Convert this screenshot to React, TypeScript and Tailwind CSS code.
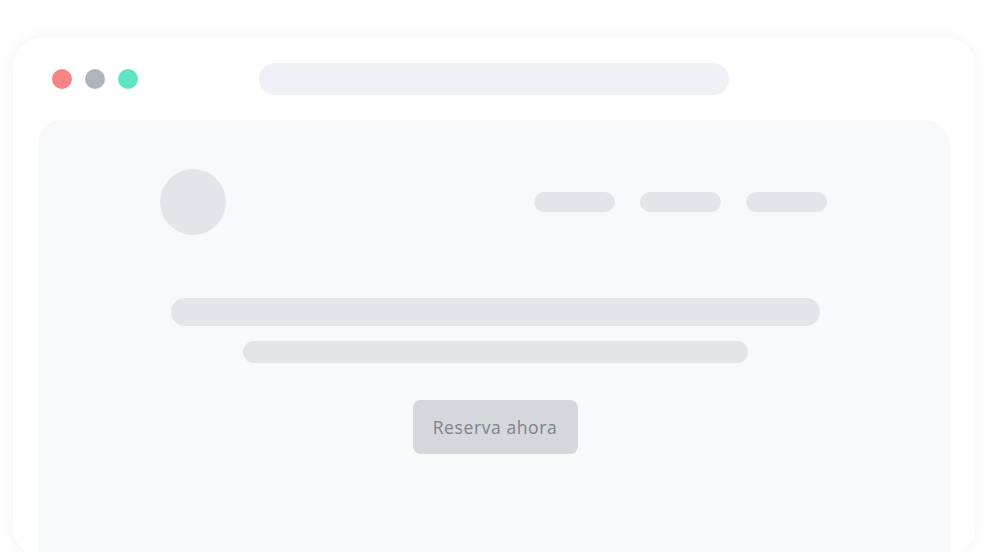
export default function App() {
  return (
    <div
      className="w-[996px] h-[552px] overflow-hidden bg-white pt-[38px] pl-[13px]"
      style={{ fontFamily: '"Open Sans", "Noto Sans", sans-serif' }}
    >
      {/* Browser window */}
      <div className="w-[962px] h-[518px] rounded-[28px] bg-white shadow-[0_0_14px_rgba(0,0,0,0.06)] px-[25px] flex flex-col overflow-hidden">
        {/* Top bar */}
        <div className="h-[82px] shrink-0 flex items-center pl-[14px]">
          <div className="flex items-center gap-[13px]">
            <span className="block w-[20px] h-[20px] rounded-full bg-[#f58582]" />
            <span className="block w-[20px] h-[20px] rounded-full bg-[#adb5bd]" />
            <span className="block w-[20px] h-[20px] rounded-full bg-[#5de5c5]" />
          </div>
          <div className="ml-[121px] w-[470px] h-[32px] rounded-full bg-[#eff1f5]" />
        </div>

        {/* Page content */}
        <div className="flex-1 rounded-t-[24px] bg-[#f8f9fb] px-[122px] pt-[49px] flex flex-col">
          <div className="flex items-center justify-between">
            <div className="w-[66px] h-[66px] rounded-full bg-[#e3e6e9]" />
            <div className="flex items-center gap-[25px] pr-px">
              <div className="w-[81px] h-[20px] rounded-full bg-[#e3e6e9]" />
              <div className="w-[81px] h-[20px] rounded-full bg-[#e3e6e9]" />
              <div className="w-[81px] h-[20px] rounded-full bg-[#e3e6e9]" />
            </div>
          </div>

          <div className="mt-[63px] flex flex-col items-center">
            <div className="w-[649px] h-[28px] rounded-full bg-[#e3e6e9] translate-x-[1px]" />
            <div className="mt-[15px] w-[505px] h-[22px] rounded-full bg-[#e3e6e9] translate-x-[1px]" />
            <button className="mt-[37px] w-[165px] h-[54px] rounded-[8px] bg-[#d4d8dc] text-[#7f8387] text-[17.5px] font-medium tracking-[0.6px] translate-x-[1px]">
              Reserva ahora
            </button>
          </div>
        </div>
      </div>
    </div>
  );
}
